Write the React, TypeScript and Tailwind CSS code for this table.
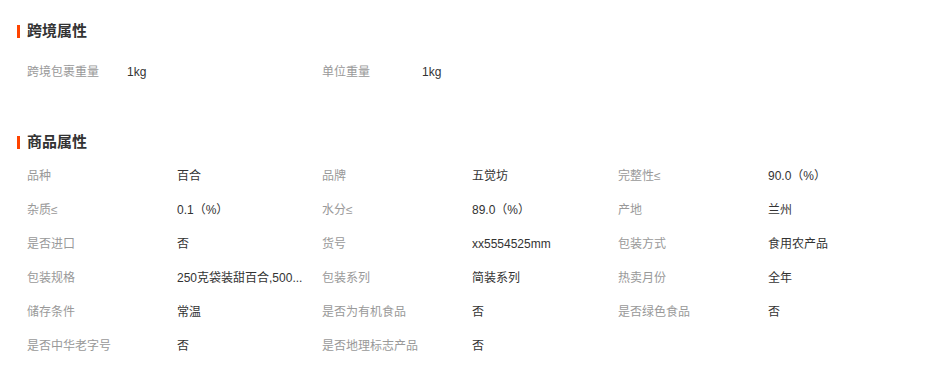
const crossAttrs = [
  { label: '跨境包裹重量', value: '1kg' },
  { label: '单位重量', value: '1kg' },
];

const goodsAttrs = [
  { label: '品种', value: '百合' },
  { label: '品牌', value: '五觉坊' },
  { label: '完整性≤', value: '90.0（%）' },
  { label: '杂质≤', value: '0.1（%）' },
  { label: '水分≤', value: '89.0（%）' },
  { label: '产地', value: '兰州' },
  { label: '是否进口', value: '否' },
  { label: '货号', value: 'xx5554525mm' },
  { label: '包装方式', value: '食用农产品' },
  { label: '包装规格', value: '250克袋装甜百合,500...' },
  { label: '包装系列', value: '简装系列' },
  { label: '热卖月份', value: '全年' },
  { label: '储存条件', value: '常温' },
  { label: '是否为有机食品', value: '否' },
  { label: '是否绿色食品', value: '否' },
  { label: '是否中华老字号', value: '否' },
  { label: '是否地理标志产品', value: '否' },
];

function SectionTitle({ title }: { title: string }) {
  return (
    <div className="flex items-center h-5 pl-[17px]">
      <span className="w-[3px] h-[13px] bg-[#ff4400]" />
      <h2 className="ml-[7px] text-[15px] leading-5 font-bold text-[#333]">{title}</h2>
    </div>
  );
}

export default function App() {
  return (
    <div
      className="w-[934px] h-[365px] bg-white overflow-hidden pt-[21px]"
      style={{ fontFamily: '"Liberation Sans", "Noto Sans CJK SC", sans-serif' }}
    >
      <SectionTitle title="跨境属性" />
      <div className="mt-[14px] pl-[27px] grid grid-cols-[295px_295px] text-xs">
        {crossAttrs.map((a) => (
          <div key={a.label} className="flex items-center h-[34px]">
            <span className="w-[100px] text-[#999]">{a.label}</span>
            <span className="text-[#333]">{a.value}</span>
          </div>
        ))}
      </div>

      <div className="mt-[43px]">
        <SectionTitle title="商品属性" />
      </div>
      <div className="mt-[7px] pl-[27px] grid grid-cols-[295px_296px_295px] text-xs">
        {goodsAttrs.map((a) => (
          <div key={a.label} className="flex items-center h-[34px]">
            <span className="w-[150px] text-[#999] whitespace-nowrap">{a.label}</span>
            <span className="w-[135px] text-[#333] whitespace-nowrap overflow-hidden">{a.value}</span>
          </div>
        ))}
      </div>
    </div>
  );
}
